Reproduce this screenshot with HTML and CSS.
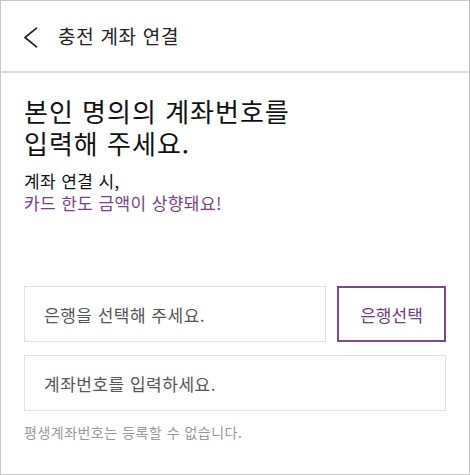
FILE: index.html
```html
<!DOCTYPE html>
<html lang="ko">
<head>
<meta charset="utf-8">
<link rel="stylesheet" href="styles.css">
</head>
<body>
<div class="page">
  <header class="header">
    <svg class="back" width="15" height="21" viewBox="0 0 15 21" aria-hidden="true">
      <path d="M13.5 1.2 L2 10.5 L13.5 19.8" fill="none" stroke="#222" stroke-width="1.7" stroke-linecap="round" stroke-linejoin="round"/>
    </svg>
    <h1 class="title">충전 계좌 연결</h1>
  </header>
  <main class="content">
    <h2 class="heading">본인 명의의 계좌번호를<br>입력해 주세요.</h2>
    <p class="sub">계좌 연결 시,<br><span class="accent">카드 한도 금액이 상향돼요!</span></p>
    <div class="row">
      <div class="field field-bank">은행을 선택해 주세요.</div>
      <button class="bank-btn" type="button">은행선택</button>
    </div>
    <div class="field field-account">계좌번호를 입력하세요.</div>
    <p class="notice">평생계좌번호는 등록할 수 없습니다.</p>
  </main>
</div>
</body>
</html>
```
FILE: styles.css
```css
* { box-sizing: border-box; }
html, body { margin: 0; padding: 0; background: #fff; }
body {
  font-family: "Noto Sans CJK KR", "Noto Sans", sans-serif;
  color: #222;
}
.page {
  width: 470px;
  height: 475px;
  border: 1px solid #c8c8c8;
  background: #fff;
  overflow: hidden;
}
.header {
  height: 72px;
  display: flex;
  align-items: center;
  padding-left: 22px;
  border-bottom: 2px solid #dcdcdc;
}
.back { display: block; flex: none; margin-top: 2px; }
.title {
  margin: 0 0 0 20px;
  font-size: 19px;
  letter-spacing: 0.7px;
  font-weight: 400;
  color: #222;
  line-height: 26px;
}
.content {
  padding: 0 23px;
}
.heading {
  margin: 22px 0 0;
  font-size: 26px;
  letter-spacing: 1px;
  font-weight: 400;
  line-height: 32px;
  color: #111;
}
.sub {
  margin: 11px 0 0;
  font-size: 17px;
  letter-spacing: 0.4px;
  line-height: 22px;
  color: #111;
}
.accent { color: #7b3f8c; }
.row {
  display: flex;
  gap: 11px;
  margin-top: 72px;
}
.field {
  height: 56px;
  border: 1px solid #e2e2e2;
  display: flex;
  align-items: center;
  padding-left: 19px;
  font-size: 17px;
  letter-spacing: 0.5px;
  color: #555;
}
.field-bank { flex: 1; }
.bank-btn {
  width: 109px;
  height: 56px;
  flex: none;
  border: 2px solid #7b4a8b;
  background: #fff;
  color: #6f3d80;
  font-family: inherit;
  font-size: 17px;
  padding: 0;
}
.field-account { margin-top: 13px; }
.notice {
  margin: 11px 0 0;
  font-size: 14px;
  letter-spacing: 0.5px;
  line-height: 20px;
  color: #999;
}
```
